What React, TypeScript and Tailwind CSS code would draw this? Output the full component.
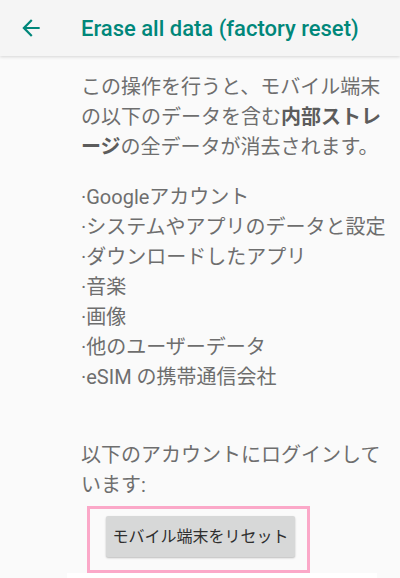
export default function App() {
  return (
    <div className="w-[400px] h-[578px] overflow-hidden bg-[#fafafa] font-['Roboto','Noto_Sans_CJK_JP',sans-serif]">
      {/* Toolbar */}
      <header className="h-14 bg-[#f5f5f5] shadow-[0_1px_3px_rgba(0,0,0,0.15)] flex items-center relative z-10">
        <svg viewBox="0 0 24 24" className="w-[26px] h-[26px] ml-[18px] fill-[#00877a]" aria-hidden="true">
          <path d="M20 11H7.83l5.59-5.59L12 4l-8 8 8 8 1.41-1.41L7.83 13H20v-2z" />
        </svg>
        <h1 className="ml-[37px] text-[22px] font-medium text-[#00877a]">
          Erase all data (factory reset)
        </h1>
      </header>

      {/* Body */}
      <div className="pl-[81px] pt-4 text-[20px] leading-[30px] text-[#6e6e6e]">
        <p>
          この操作を行うと、モバイル端末
          <br />
          の以下のデータを含む<span className="font-bold text-[#5c5c5c]">内部ストレ</span>
          <br />
          <span className="font-bold text-[#5c5c5c]">ージ</span>の全データが消去されます。
        </p>

        <ul className="mt-5">
          <li>·Googleアカウント</li>
          <li>·システムやアプリのデータと設定</li>
          <li>·ダウンロードしたアプリ</li>
          <li>·音楽</li>
          <li>·画像</li>
          <li>·他のユーザーデータ</li>
          <li>·eSIM の携帯通信会社</li>
        </ul>

        <p className="mt-12">
          以下のアカウントにログインして
          <br />
          います:
        </p>
      </div>

      {/* Reset button (highlighted) */}
      <div className="ml-[87px] mt-[6px] w-[223px] h-[67px] border-[3px] border-[#fba8c8] pl-4 pt-[7px]">
        <button className="w-[189px] h-[41px] rounded-[2px] bg-[#d7d8d8] shadow-[0_1px_2px_rgba(0,0,0,0.25)] text-[16px] text-[#2e2e2e]">
          モバイル端末をリセット
        </button>
      </div>
      <div className="ml-[67px] w-[310px] h-4 bg-white" />
    </div>
  );
}
